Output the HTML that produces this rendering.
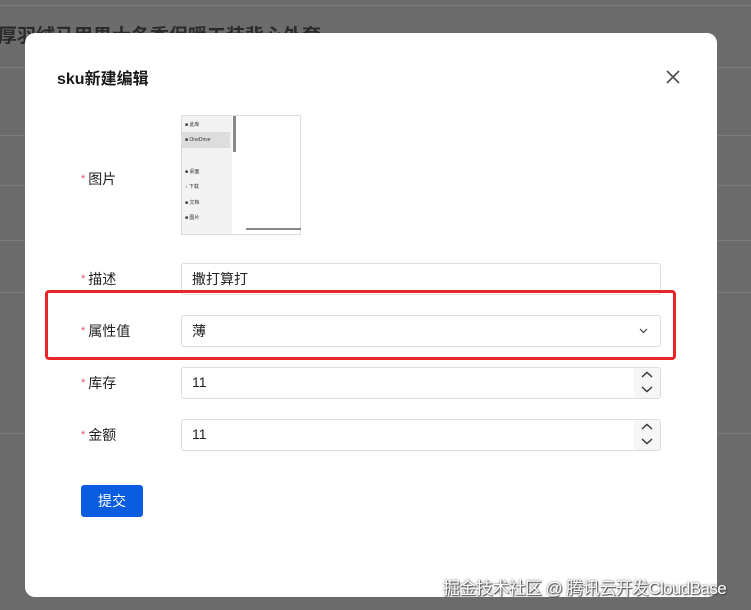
<!DOCTYPE html>
<html><head><meta charset="utf-8"><style>
*{box-sizing:border-box;margin:0;padding:0}
body{width:751px;height:610px;background:#6c6c6c;position:relative;overflow:hidden;font-family:"Liberation Sans","Noto Sans CJK SC",sans-serif;}
.ln{position:absolute;left:0;width:751px;height:1px;background:#7c7c7c}
.bgt{position:absolute;left:-2px;top:21px;font-size:19px;font-weight:bold;color:#2a2a2a}
.modal{position:absolute;left:25px;top:33px;width:692px;height:564px;background:#fff;border-radius:10px}
.title{position:absolute;left:57px;top:65px;font-size:16px;font-weight:bold;color:#1a1a1a}
.close{position:absolute;left:664px;top:68px;width:18px;height:18px}
.lab{position:absolute;left:81px;font-size:14px;color:#222}
.lab b{color:#e0556a;font-weight:normal;font-size:11px;margin-right:3px;position:relative;top:-2px}
.inp{position:absolute;left:181px;width:480px;height:32px;border:1px solid #ddd;border-radius:3px;font-size:14px;color:#222;padding:6px 10px}
.spin{position:absolute;right:0;top:0;width:26px;height:30px;background:#f6f6f6}
.btn{position:absolute;left:81px;top:485px;width:62px;height:32px;background:#0b5ddf;border-radius:3px;color:#fff;font-size:14px;text-align:center;line-height:32px}
.red{position:absolute;left:45px;top:290px;width:631px;height:70px;border:3px solid #e8262a;border-radius:4px}
.wm{position:absolute;left:443px;top:574px;font-size:17px;letter-spacing:-0.6px;color:#fff;text-shadow:0 0 2px #555,1px 1px 1px #444}
.img{position:absolute;left:181px;top:115px;width:120px;height:120px;border:1px solid #ddd;background:#fff;font-size:5px;color:#333}
</style></head><body>
<div class="ln" style="top:5px"></div><div class="ln" style="top:67px"></div><div class="ln" style="top:135px"></div><div class="ln" style="top:185px"></div><div class="ln" style="top:240px"></div><div class="ln" style="top:292px"></div><div class="ln" style="top:433px"></div>
<div class="bgt">厚羽绒马甲男士冬季保暖工装背心外套</div>
<div class="modal"></div>
<div class="title">sku新建编辑</div>
<svg class="close" viewBox="0 0 18 18"><path d="M3 3L15 15M15 3L3 15" stroke="#555" stroke-width="1.8"/></svg>
<div class="lab" style="top:169px"><b>*</b>图片</div>
<div class="img">
<div style="position:absolute;left:0;top:0;width:50px;height:118px;background:#f3f3f3"></div>
<div style="position:absolute;left:0;top:16px;width:48px;height:16px;background:#ddd"></div>
<div style="position:absolute;left:51px;top:0;width:3px;height:36px;background:#888"></div>
<div style="position:absolute;left:3px;top:5px">■ 此库</div>
<div style="position:absolute;left:3px;top:21px">■ OneDrive</div>
<div style="position:absolute;left:3px;top:52px">■ 桌面</div>
<div style="position:absolute;left:3px;top:67px">↓ 下载</div>
<div style="position:absolute;left:3px;top:83px">■ 文档</div>
<div style="position:absolute;left:3px;top:98px">■ 图片</div>
<div style="position:absolute;left:64px;top:112px;width:55px;height:2px;background:#888"></div>
</div>
<div class="lab" style="top:269px"><b>*</b>描述</div>
<div class="inp" style="top:263px;padding-top:5px">撒打算打</div>
<div class="lab" style="top:321px"><b>*</b>属性值</div>
<div class="inp" style="top:315px;padding-top:5px">薄<svg style="position:absolute;right:12px;top:12px" width="9" height="6" viewBox="0 0 9 6"><path d="M1 1L4.5 4.5L8 1" stroke="#444" fill="none" stroke-width="1.2"/></svg></div>
<div class="lab" style="top:373px"><b>*</b>库存</div>
<div class="inp" style="top:367px">11<div class="spin"><svg width="26" height="30" viewBox="0 0 26 30"><path d="M8 9L13 4.5L18 9M8 19L13 23.5L18 19" stroke="#333" fill="none" stroke-width="1.4"/></svg></div></div>
<div class="lab" style="top:425px"><b>*</b>金额</div>
<div class="inp" style="top:419px">11<div class="spin"><svg width="26" height="30" viewBox="0 0 26 30"><path d="M8 9L13 4.5L18 9M8 19L13 23.5L18 19" stroke="#333" fill="none" stroke-width="1.4"/></svg></div></div>
<div class="btn">提交</div>
<div class="red"></div>
<div class="wm">掘金技术社区 @ 腾讯云开发CloudBase</div>
</body></html>
